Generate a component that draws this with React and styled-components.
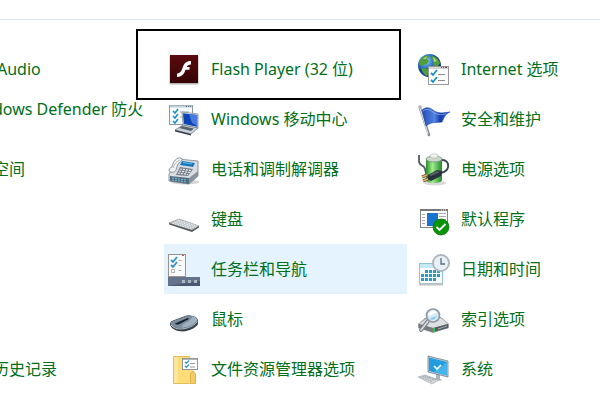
import React from "react";
import styled, { createGlobalStyle } from "styled-components";

const GlobalStyle = createGlobalStyle`
  * { box-sizing: border-box; }
  body {
    margin: 0;
    background: #fff;
    font-family: "Noto Sans", "Noto Sans CJK SC", sans-serif;
    font-size: 16px;
    line-height: 20px;
  }
`;

const Page = styled.div`
  overflow: hidden;
  padding-bottom: 6px;
`;

const TopRule = styled.div`
  height: 20px;
  border-bottom: 1px solid #d9e5f2;
`;

const Columns = styled.main`
  display: grid;
  grid-template-columns: 164px minmax(243px, 1fr) minmax(243px, 1fr);
  gap: 7px;
  margin: 24px 0 0 -7px;
`;

const Column = styled.ul`
  display: grid;
  grid-template-rows: repeat(7, 50px);
  margin: 0;
  padding: 0;
  list-style: none;
`;

const Row = styled.li`
  position: relative;
  display: flex;
`;

const ItemLink = styled.a`
  flex: 1;
  display: flex;
  align-items: center;
  gap: 11px;
  padding: 0 4px;
  color: #00701a;
  background: ${(p) => (p.$active ? "#e5f3ff" : "transparent")};
  text-decoration: none;
  white-space: nowrap;
  &:hover { background: #e5f3ff; }
`;

const ClippedLink = styled(ItemLink)`
  padding: 0 0 ${(p) => (p.$raised ? 20 : 0)}px ${(p) => (p.$wordStart ? 4 : 0)}px;
`;

const Icon = styled.svg`
  width: 32px;
  height: 32px;
  flex: none;
  overflow: visible;
`;

const Highlight = styled.span`
  position: absolute;
  inset: -15px 6px -6px -28px;
  border: 2px solid #000;
  pointer-events: none;
`;

const Svg = ({ children }) => (
  <Icon viewBox="0 0 32 32" aria-hidden="true">{children}</Icon>
);

const FlashIcon = () => (
  <Svg>
    <defs>
      <linearGradient id="fl" x1="0" y1="0" x2="0" y2="1">
        <stop offset="0" stopColor="#5a0b0d" /><stop offset="1" stopColor="#360405" />
      </linearGradient>
    </defs>
    <rect x="1.5" y="2.5" width="29" height="29" rx="1" fill="#b9b4b4" />
    <rect x="2" y="2" width="28" height="28" fill="url(#fl)" />
    <path d="M23 8v3.500c-2.500 0-3.600 1-4.200 2.500h2.700v2.800h-4C16.200 21 13.700 24 9 24v-3.500c3 0 4.300-2.300 5.500-5.500C16 10.500 18 8 23 8z" fill="#fff" />
  </Svg>
);

const MobilityIcon = () => (
  <Svg>
    <rect x="1.500" y="2.500" width="23" height="19" fill="#f7fafc" stroke="#8c9aa6" />
    <path d="M2 3.500h22" stroke="#c3ced8" strokeWidth="2" />
    <path d="M18 3.500h1m1 0h1m1 0h1" stroke="#58636d" />
    <path d="M5 8l2 2 3-4M5 13l2 2 3-4M5 18l2 2 3-4" fill="none" stroke="#178ed0" strokeWidth="1.500" />
    <path d="M12 9h9M12 14h5" stroke="#9aa6ae" />
    <path d="M14 9l16 2v14l-15-3z" fill="#dfe5ed" stroke="#77838f" strokeWidth=".7" />
    <path d="M15 10.200l14.200 1.700v11.800L15.800 21z" fill="#0c43b5" />
    <path d="M21 11l8.200 1v11L24 20z" fill="#477be0" />
    <path d="M15 22l15 3-7 6-16-4z" fill="#cbd2da" stroke="#69737e" strokeWidth=".7" />
    <path d="M14 23l12 2.500-3 2.500-12-3z" fill="#59636e" />
    <path d="M7 27l16 4v1.500L7 28.500z" fill="#353d47" />
  </Svg>
);

const PhoneIcon = () => (
  <Svg>
    <ellipse cx="17" cy="29" rx="14" ry="2.500" fill="#d6d6d6" />
    <path d="M10 6l20 2v15l-9 8L1 28v-7z" fill="#d9dde1" stroke="#79828a" strokeWidth=".8" />
    <path d="M2 23l19 2v6L2 28z" fill="#536b7f" />
    <path d="M21 25l9-7v5l-9 8z" fill="#8a949e" />
    <path d="M14 8l13 2-2 4-13-2z" fill="#1878bd" /><path d="M15 9.500l9 1.400" stroke="#64bae6" />
    <path d="M12 14l13 2-5 7-12-1z" fill="#737e89" />
    <path d="M12 16l11 1.500M11 18l11 1.500M10 20l10 1.500" stroke="#edf0f2" strokeWidth="1.200" strokeDasharray="2 1" />
    <path d="M4 14C5 8 9 4 13 5c2 1 1 3-1 4-2 1-3 4-4 8-1 3-7 3-7 0 0-2 2-2 3-3z" fill="#f1f3f4" stroke="#77818a" strokeWidth=".8" />
    <path d="M5 15c1-4 4-7 7-8" fill="none" stroke="#b4bdc5" />
    <path d="M4 25l15 2M4 27l15 2" stroke="#75bdd8" strokeDasharray="2 1" />
  </Svg>
);

const KeyboardIcon = () => (
  <Svg>
    <path d="M1 20l10-4 20 7-7 4z" fill="#b2b8bd" stroke="#858c92" strokeWidth=".6" />
    <path d="M1 20l23 7v2L1 21.500zM24 27l7-4v1.500L24 29z" fill="#565c61" />
    <path d="M4 20l20 6M6 19l20 6M8 18l20 6M10 17l19 6" stroke="#e7eaeb" strokeWidth="1.100" strokeDasharray="2 .7" />
  </Svg>
);

const TaskbarIcon = () => (
  <Svg>
    <rect x=".500" y="1.500" width="17" height="22" fill="#fafafa" stroke="#98938f" />
    <path d="M14 2.500h2" stroke="#d15445" />
    <path d="M3 7l2 2 4-5M3 12l2 2 4-5" fill="none" stroke="#2c93c8" strokeWidth="1.800" />
    <path d="M10.500 7.500h3m-3 5h3m-3 5h3" stroke="#aaa" />
    <rect x="3.500" y="16.500" width="3" height="3" fill="#fff" stroke="#b9b9b9" />
    <path d="M0 24h32v9H0z" fill="#4b5770" /><path d="M0 24h32v4L0 33z" fill="#65728b" />
    <path d="M14 27h3v3h-3zm6 0h3v3h-3zm6 0h3v3h-3z" fill="#aeb6c3" />
  </Svg>
);

const MouseIcon = () => (
  <Svg>
    <path d="M2 21c0-1.500 1-3 3-3.500L17 13c2-.700 3-.800 5-.500 4 .600 7 1.500 8 4.500v4c-1 3-8 7-15 7.500C8 28.500 2 25 2 21z" fill="#39434d" />
    <path d="M2.500 20.500C3 19 4 18.300 5.500 17.800L17 13.500c2-.700 3-.800 5-.500 3.500.500 6.500 1.500 7.500 4-2 4-8 7.500-14.500 8.200C9 25.500 3 24 2.500 20.500z" fill="#7d8d9b" />
    <path d="M14 24.500c0-4 5-5 8-7.500 2-1.500 2.500-3 2-3.700 3 .700 5 1.700 5.500 3.700-2 4-9 7.500-15.500 7.500z" fill="#9fb0be" />
    <path d="M7 20.500l12-5.300c1.500-.500 2.500.300 1 1.300l-9 4.700c-2 .800-4 .300-4-.700z" fill="#17212c" />
    <path d="M3 22c3 4 9 4.500 14 3.500 5-1 10-3.500 12.500-7" fill="none" stroke="#c3ced7" strokeWidth=".9" />
  </Svg>
);

const FolderIcon = () => (
  <Svg>
    <path d="M5.500 3.500h16v27h-16z" fill="#ffdc7a" stroke="#e4be59" />
    <path d="M6 4h4v26H6z" fill="#ffe69b" />
    <path d="M21 17h4v13h-4z" fill="#ffdc7a" />
    <path d="M22.500 30.500V21l2.500-3 2.500 3v9.500z" fill="#f5cc63" stroke="#deb44d" />
    <rect x="14.500" y="5.500" width="15" height="11" fill="#fff" stroke="#8e9398" />
    <path d="M15 6h14" stroke="#989da0" strokeWidth="1.500" />
    <path d="M17 9l1.300 1.300L21 7.500M17 13l1.300 1.300L21 11.500" fill="none" stroke="#3294ce" strokeWidth="1.300" />
    <path d="M22 10.500h5m-5 3.500h5" stroke="#999" />
  </Svg>
);

const InternetIcon = () => (
  <Svg>
    <defs><radialGradient id="ocean" cx=".35" cy=".3"><stop offset="0" stopColor="#afe5ff" /><stop offset=".45" stopColor="#438fd2" /><stop offset="1" stopColor="#133f95" /></radialGradient></defs>
    <circle cx="11.500" cy="12.500" r="11.500" fill="url(#ocean)" />
    <path d="M4 5c2-3 5-3 7-2l-2 3 2 2-3 4-2-1-2 2-2-1c-1-2 0-5 2-7zM14 3c4 0 7 4 8 7l-3 4-4-2 1-4-2-2zM4 15l5 1 3 3-3 4c-3-1-6-5-5-8z" fill="#4f9e39" />
    <path d="M5 6l4-3-1 3zM15 4l4 4-3 1z" fill="#b7d881" />
    <rect x="10.500" y="13.500" width="20" height="18" fill="#fff" stroke="#979797" />
    <path d="M11 15h19" stroke="#d6d6d6" strokeWidth="2" /><path d="M23 14.500h1m1 0h1m1 0h2" stroke="#505050" />
    <path d="M13 20l2 2 4-5M13 27l2 2 4-5" fill="none" stroke="#198fca" strokeWidth="1.800" />
    <path d="M20 21.500h7m-7 6h7" stroke="#8d8d8d" />
  </Svg>
);

const FlagIcon = () => (
  <Svg>
    <defs><linearGradient id="flag"><stop stopColor="#214bba" /><stop offset=".45" stopColor="#5583e0" /><stop offset=".65" stopColor="#173fae" /><stop offset="1" stopColor="#3165ca" /></linearGradient></defs>
    <path d="M2 5l9 27" stroke="#858e97" strokeWidth="2.500" strokeLinecap="round" /><path d="M2 5l8 26" stroke="#e8ebed" />
    <circle cx="2" cy="4" r="1.700" fill="#aab2b9" />
    <path d="M4 7c5-4 8-2 11 0 5 4 10 3 17 2-5 2-6 6-8 10-5 1-10-1-16 4z" fill="url(#flag)" stroke="#1740a4" strokeWidth=".6" />
    <path d="M5 8c4-3 7-1 10 1 4 3 8 3 13 2" fill="none" stroke="#97b7f2" strokeWidth=".7" />
  </Svg>
);

const PowerIcon = () => (
  <Svg>
    <defs><linearGradient id="battery"><stop stopColor="#278a28" /><stop offset=".4" stopColor="#a0ed8b" /><stop offset="1" stopColor="#218b2c" /></linearGradient></defs>
    <ellipse cx="17" cy="30" rx="11" ry="2.500" fill="#d9d9d9" />
    <path d="M1 2v6c0 4 3 4 5 6s1 6 3 8" fill="none" stroke="#515c66" strokeWidth="1.800" />
    <path d="M8 6h16v21c0 4-16 4-16 0z" fill="url(#battery)" />
    <ellipse cx="16" cy="6" rx="8" ry="3" fill="#ccd9cd" stroke="#73947a" strokeWidth=".8" />
    <path d="M12 4V2c2-1.500 6-1.500 8 0v2c-2 1.500-6 1.500-8 0z" fill="#edf2ed" stroke="#9ba59c" strokeWidth=".5" />
    <path d="M22 20c7-1 9-5 8-9-1-3-4-4-6-4" fill="none" stroke="#3d4851" strokeWidth="2" />
    <path d="M10 22l9-5 5 1-1 5-10 5-4-2z" fill="#29313b" /><path d="M11 22l8-4 3 1-9 4z" fill="#59636c" />
    <path d="M4 24l5-2m-4 6l5-2" stroke="#715430" strokeWidth="3" /><path d="M4 24l5-2m-4 6l5-2" stroke="#d9b46c" strokeWidth="1.500" />
  </Svg>
);

const ProgramsIcon = () => (
  <Svg>
    <rect x="2.500" y="6.500" width="27" height="18" fill="#fff" stroke="#858585" />
    <path d="M2 7h28" stroke="#777" strokeWidth="2" /><path d="M23 7h1m1 0h1m1 0h1" stroke="#fff" />
    <path d="M4 11.500h3m-3 3h3m-3 3h3m-3 3h3M21 10.500h7m-7 3h7m-7 3h7" stroke="#aaa" />
    <path d="M9 10h11v13H9z" fill="#1775cf" />
    <circle cx="23" cy="24" r="8" fill="#079407" stroke="#087008" strokeWidth=".7" />
    <path d="M18.500 24l3 3 6-6" fill="none" stroke="#fff" strokeWidth="1.800" />
  </Svg>
);

const CalendarIcon = () => (
  <Svg>
    <rect x="1.500" y="10.500" width="23" height="20" fill="#fff" stroke="#8ec4d6" />
    <path d="M2 11h22v4H2z" fill="#c5eaf5" /><path d="M1 31.500h24" stroke="#c2c2c2" strokeWidth="2" />
    <path d="M7 18.500h16M3 22.500h20M3 26.500h16" stroke="#269dc7" strokeWidth="3" strokeDasharray="3 1" />
    <circle cx="23" cy="10" r="8" fill="#f3f6f8" stroke="#aeb7bf" strokeWidth="2" />
    <circle cx="23" cy="10" r="6" fill="#e8f0f5" /><path d="M23 5v6h4" fill="none" stroke="#556e82" strokeWidth="1.300" />
  </Svg>
);

const IndexingIcon = () => (
  <Svg>
    <path d="M0 21l7-6 16-1 8 7v4l-16 5-15-5z" fill="#9b9fa3" />
    <path d="M1 21l7-5 15-1 7 6-15 4z" fill="#dde0e2" /><path d="M1 21l14 4v4L1 25z" fill="#74797e" /><path d="M15 25l15-4v4l-15 4z" fill="#555b60" />
    <path d="M16 25v4" stroke="#31c53b" strokeWidth="2" /><path d="M20 26l9-3" stroke="#a5aaae" />
    <path d="M10 18l-7 9" stroke="#777f87" strokeWidth="4" strokeLinecap="round" /><path d="M10 18l-7 9" stroke="#d8dce0" strokeWidth="1.800" strokeLinecap="round" />
    <circle cx="15" cy="12.500" r="6.500" fill="#d6ebfa" stroke="#9097a0" strokeWidth="1.700" />
    <path d="M10 12c2-6 8-5 9-2-3-1-5 4-9 2z" fill="#fff" /><path d="M12 16c3-3 5-1 7-4-1 5-5 6-7 4z" fill="#96cced" />
  </Svg>
);

const SystemIcon = () => (
  <Svg>
    <path d="M18 21l4 1v4l3 1-6 1-5-2 4-1z" fill="#a7b3bd" />
    <path d="M10 3l20 5v16l-20-5z" fill="#c4d2dc" stroke="#626d76" strokeWidth=".7" />
    <path d="M11 4.500l18 4.500v13.500L11 18z" fill="#209cdf" /><path d="M29 9v13.500L16 19z" fill="#45b4ea" />
    <path d="M16 13l3 3 4-4" fill="none" stroke="#fff" strokeWidth="1.700" />
    <path d="M0 24l7-2 14 5-7 4z" fill="#d2d8dd" stroke="#a0a8af" strokeWidth=".6" />
    <path d="M2 24l12 4.500M4 23l13 4.500M6 22.500l13 4.500" stroke="#929ca4" strokeWidth=".7" strokeDasharray="2 .7" />
  </Svg>
);

const clipped = [
  { text: "Audio", wordStart: true },
  { text: "dows Defender 防火", raised: true },
  { text: "空间" },
  null,
  null,
  null,
  { text: "历史记录" },
];

const columns = [
  [
    { text: "Flash Player (32 位)", icon: FlashIcon, framed: true },
    { text: "Windows 移动中心", icon: MobilityIcon },
    { text: "电话和调制解调器", icon: PhoneIcon },
    { text: "键盘", icon: KeyboardIcon },
    { text: "任务栏和导航", icon: TaskbarIcon, active: true },
    { text: "鼠标", icon: MouseIcon },
    { text: "文件资源管理器选项", icon: FolderIcon },
  ],
  [
    { text: "Internet 选项", icon: InternetIcon },
    { text: "安全和维护", icon: FlagIcon },
    { text: "电源选项", icon: PowerIcon },
    { text: "默认程序", icon: ProgramsIcon },
    { text: "日期和时间", icon: CalendarIcon },
    { text: "索引选项", icon: IndexingIcon },
    { text: "系统", icon: SystemIcon },
  ],
];

export default function App() {
  return (
    <Page lang="zh-CN">
      <GlobalStyle />
      <TopRule />
      <Columns>
        <Column>
          {clipped.map((item, i) => (
            <Row key={i}>
              {item && (
                <ClippedLink href="#" $raised={item.raised} $wordStart={item.wordStart}>
                  {item.text}
                </ClippedLink>
              )}
            </Row>
          ))}
        </Column>
        {columns.map((items, c) => (
          <Column key={c}>
            {items.map(({ text, icon: ItemIcon, active, framed }) => (
              <Row key={text}>
                <ItemLink href="#" $active={active}>
                  <ItemIcon />
                  <span>{text}</span>
                </ItemLink>
                {framed && <Highlight />}
              </Row>
            ))}
          </Column>
        ))}
      </Columns>
    </Page>
  );
}
